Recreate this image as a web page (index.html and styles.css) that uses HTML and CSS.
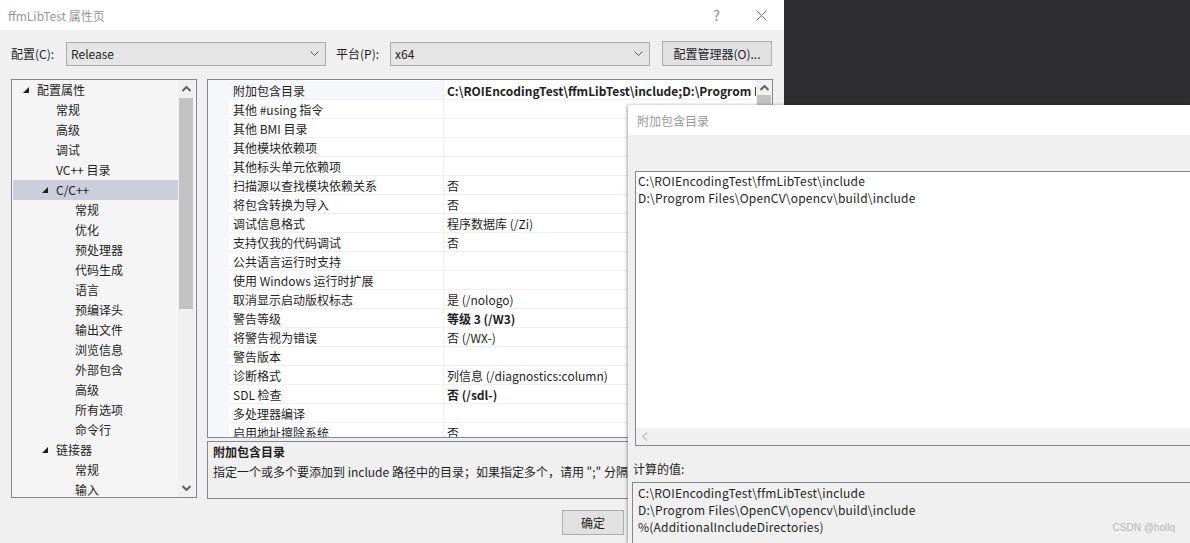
FILE: index.html
```html
<!DOCTYPE html>
<html lang="zh-CN">
<head>
    <meta charset="UTF-8">
    <title>ffmLibTest 属性页</title>
    <link rel="stylesheet" href="styles.css">
</head>
<body>

<!-- main property page dialog -->
<div class="dialog">
    <div class="titlebar">
        <span class="title">ffmLibTest 属性页</span>
        <span class="caption-btn help">?</span>
        <span class="caption-btn">
            <svg width="11" height="11" viewBox="0 0 11 11"><path d="M0.5 0.5L10.5 10.5M10.5 0.5L0.5 10.5" stroke="#777" stroke-width="1"/></svg>
        </span>
    </div>

    <div class="config">
        <span class="config-label">配置(C):</span>
        <div class="combo">
            <span>Release</span>
            <svg width="9" height="6" viewBox="0 0 9 6"><polyline points="0.5,0.5 4.5,4.5 8.5,0.5" fill="none" stroke="#555"/></svg>
        </div>
        <span class="config-label platform">平台(P):</span>
        <div class="combo">
            <span>x64</span>
            <svg width="9" height="6" viewBox="0 0 9 6"><polyline points="0.5,0.5 4.5,4.5 8.5,0.5" fill="none" stroke="#555"/></svg>
        </div>
        <button class="btn manager">配置管理器(O)...</button>
    </div>

    <div class="main">
        <!-- left tree -->
        <div class="tree">
            <div class="tree-items">
                <div class="node lv0"><svg class="tri" width="6" height="6"><polygon points="6,0 6,6 0,6" fill="#1e1e1e"/></svg>配置属性</div>
                <div class="node lv1">常规</div>
                <div class="node lv1">高级</div>
                <div class="node lv1">调试</div>
                <div class="node lv1">VC++ 目录</div>
                <div class="node lv1 open selected"><svg class="tri" width="6" height="6"><polygon points="6,0 6,6 0,6" fill="#1e1e1e"/></svg>C/C++</div>
                <div class="node lv2">常规</div>
                <div class="node lv2">优化</div>
                <div class="node lv2">预处理器</div>
                <div class="node lv2">代码生成</div>
                <div class="node lv2">语言</div>
                <div class="node lv2">预编译头</div>
                <div class="node lv2">输出文件</div>
                <div class="node lv2">浏览信息</div>
                <div class="node lv2">外部包含</div>
                <div class="node lv2">高级</div>
                <div class="node lv2">所有选项</div>
                <div class="node lv2">命令行</div>
                <div class="node lv1 open"><svg class="tri" width="6" height="6"><polygon points="6,0 6,6 0,6" fill="#1e1e1e"/></svg>链接器</div>
                <div class="node lv2">常规</div>
                <div class="node lv2">输入</div>
            </div>
            <div class="vscroll tree-scroll">
                <div class="arrow">
                    <svg width="9" height="6" viewBox="0 0 9 6"><polyline points="0.5,5 4.5,1 8.5,5" fill="none" stroke="#606060" stroke-width="2"/></svg>
                </div>
                <div class="thumb"></div>
                <div class="track"></div>
                <div class="arrow">
                    <svg width="9" height="6" viewBox="0 0 9 6"><polyline points="0.5,1 4.5,5 8.5,1" fill="none" stroke="#606060" stroke-width="2"/></svg>
                </div>
            </div>
        </div>

        <!-- property grid + description -->
        <div class="right">
            <div class="grid">
                <div class="gutter"></div>
                <div class="rows">
                    <div class="prop first"><span class="name">附加包含目录</span><span class="value bold">C:\ROIEncodingTest\ffmLibTest\include;D:\Progrom Files\OpenCV\opencv\build\include;%(AdditionalIncludeDirectories)</span></div>
                    <div class="prop"><span class="name">其他 #using 指令</span><span class="value"></span></div>
                    <div class="prop"><span class="name">其他 BMI 目录</span><span class="value"></span></div>
                    <div class="prop"><span class="name">其他模块依赖项</span><span class="value"></span></div>
                    <div class="prop"><span class="name">其他标头单元依赖项</span><span class="value"></span></div>
                    <div class="prop"><span class="name">扫描源以查找模块依赖关系</span><span class="value">否</span></div>
                    <div class="prop"><span class="name">将包含转换为导入</span><span class="value">否</span></div>
                    <div class="prop"><span class="name">调试信息格式</span><span class="value">程序数据库 (/Zi)</span></div>
                    <div class="prop"><span class="name">支持仅我的代码调试</span><span class="value">否</span></div>
                    <div class="prop"><span class="name">公共语言运行时支持</span><span class="value"></span></div>
                    <div class="prop"><span class="name">使用 Windows 运行时扩展</span><span class="value"></span></div>
                    <div class="prop"><span class="name">取消显示启动版权标志</span><span class="value">是 (/nologo)</span></div>
                    <div class="prop"><span class="name">警告等级</span><span class="value bold">等级 3 (/W3)</span></div>
                    <div class="prop"><span class="name">将警告视为错误</span><span class="value">否 (/WX-)</span></div>
                    <div class="prop"><span class="name">警告版本</span><span class="value"></span></div>
                    <div class="prop"><span class="name">诊断格式</span><span class="value">列信息 (/diagnostics:column)</span></div>
                    <div class="prop"><span class="name">SDL 检查</span><span class="value bold">否 (/sdl-)</span></div>
                    <div class="prop"><span class="name">多处理器编译</span><span class="value"></span></div>
                    <div class="prop"><span class="name">启用地址擦除系统</span><span class="value">否</span></div>
                </div>
                <div class="vscroll grid-scroll">
                    <div class="arrow">
                        <svg width="9" height="6" viewBox="0 0 9 6"><polyline points="0.5,5 4.5,1 8.5,5" fill="none" stroke="#606060" stroke-width="2"/></svg>
                    </div>
                    <div class="thumb"></div>
                </div>
            </div>
            <div class="desc">
                <div class="desc-title">附加包含目录</div>
                <div class="desc-text">指定一个或多个要添加到 include 路径中的目录；如果指定多个，请用 ";" 分隔</div>
            </div>
        </div>
    </div>

    <div class="footer">
        <button class="btn">确定</button>
    </div>
</div>

<!-- editor dialog on top -->
<div class="overlay">
    <div class="titlebar overlay-title">附加包含目录</div>
    <div class="editbox">
        <div class="edit-lines">
            <div>C:\ROIEncodingTest\ffmLibTest\include</div>
            <div>D:\Progrom Files\OpenCV\opencv\build\include</div>
        </div>
        <div class="hscroll">
            <svg width="6" height="9" viewBox="0 0 6 9"><polyline points="5,0.5 1,4.5 5,8.5" fill="none" stroke="#c4c4c4" stroke-width="1.5"/></svg>
        </div>
    </div>
    <div class="computed-label">计算的值:</div>
    <div class="computed">
        <div>C:\ROIEncodingTest\ffmLibTest\include</div>
        <div>D:\Progrom Files\OpenCV\opencv\build\include</div>
        <div>%(AdditionalIncludeDirectories)</div>
    </div>
    <span class="watermark">CSDN @hollq</span>
</div>

</body>
</html>
```

FILE: styles.css
```css
body {
    margin: 0;
    width: 1190px;
    height: 543px;
    overflow: hidden;
    position: relative;
    background-color: #2d2d30;
    font-family: "Noto Sans CJK SC", "Noto Sans", sans-serif;
    font-size: 12px;
    color: #1e1e1e;
}

/* main dialog */
.dialog {
    width: 784px;
    height: 543px;
    background-color: #f0f0f0;
    display: flex;
    flex-direction: column;
}

.titlebar {
    height: 30px;
    flex: none;
    background-color: #fff;
    display: flex;
    align-items: center;
    padding-left: 8px;
    color: #999;
}

.titlebar .title {
    flex: 1;
}

.caption-btn {
    width: 45px;
    height: 30px;
    display: flex;
    align-items: center;
    justify-content: center;
}

.help {
    font-size: 14px;
    color: #888;
}

/* configuration row */
.config {
    display: flex;
    align-items: center;
    height: 25px;
    margin-top: 11px;
    padding-left: 11px;
}

.config-label {
    width: 55px;
}

.config-label.platform {
    margin-left: 10px;
    width: 54px;
}

.combo {
    box-sizing: border-box;
    width: 260px;
    height: 24px;
    background-color: #e5e5e5;
    border: 1px solid #acacac;
    display: flex;
    align-items: center;
    justify-content: space-between;
    padding: 0 6px 0 4px;
}

.btn {
    box-sizing: border-box;
    height: 25px;
    background-color: #e1e1e1;
    border: 1px solid #adadad;
    font-family: inherit;
    font-size: 12px;
    color: #1e1e1e;
    padding: 0;
}

.btn.manager {
    width: 110px;
    margin-left: 12px;
}

/* tree + grid area */
.main {
    display: flex;
    gap: 10px;
    margin-top: 13px;
    padding-left: 11px;
}

.tree {
    box-sizing: border-box;
    width: 186px;
    height: 419px;
    border: 1px solid #828790;
    background-color: #f5f5f5;
    display: flex;
    overflow: hidden;
}

.tree-items {
    flex: 1;
    padding-left: 1px;
}

.node {
    height: 20px;
    line-height: 19px;
    white-space: nowrap;
    position: relative;
}

.node .tri {
    position: absolute;
    top: 7px;
}

.lv0 { padding-left: 24px; }
.lv0 .tri { left: 10px; }
.lv1 { padding-left: 43px; }
.lv1 .tri { left: 29px; }
.lv2 { padding-left: 62px; }

.node.selected {
    background-color: #cccedb;
}

.vscroll {
    width: 16px;
    display: flex;
    flex-direction: column;
    background-color: #f0f0f0;
}

.vscroll .arrow {
    height: 18px;
    display: flex;
    align-items: center;
    justify-content: center;
}

.vscroll .thumb {
    margin: 0 1px;
    background-color: #c2c2c2;
}

.tree-scroll {
    margin-right: 2px;
}

.tree-scroll .thumb {
    height: 211px;
}

.tree-scroll .track {
    flex: 1;
}

.right {
    width: 566px;
    display: flex;
    flex-direction: column;
    gap: 3px;
}

.grid {
    box-sizing: border-box;
    height: 359px;
    border: 1px solid #828790;
    background-color: #fff;
    display: flex;
    overflow: hidden;
}

.gutter {
    width: 21px;
    background-color: #f5f7fb;
}

.rows {
    flex: 1;
    overflow: hidden;
    padding-top: 1px;
}

.prop {
    box-sizing: border-box;
    display: grid;
    grid-template-columns: 214px 1fr;
    height: 19px;
    line-height: 20px;
    border-bottom: 1px solid #f0f0f0;
    white-space: nowrap;
}

.prop .name {
    padding-left: 4px;
    overflow: hidden;
}

.prop .value {
    padding-left: 3px;
    border-left: 1px solid #f0f0f0;
    overflow: hidden;
}

.prop.first .name {
    background-color: #f5f7fb;
}

.bold {
    font-weight: bold;
}

.grid-scroll .thumb {
    height: 400px;
}

.desc {
    box-sizing: border-box;
    height: 58px;
    border: 1px solid #828790;
    background-color: #f0f0f0;
    padding-left: 5px;
    line-height: 19px;
    white-space: nowrap;
    overflow: hidden;
}

.desc-title {
    font-weight: bold;
}

.desc-text {
    width: 415px;
    overflow: hidden;
    margin-top: 1px;
}

.footer {
    display: flex;
    margin-top: 11px;
    padding-left: 562px;
}

.footer .btn {
    width: 62px;
    height: 25px;
    flex: none;
}

/* the editor window on top */
.overlay {
    position: absolute;
    left: 628px;
    top: 105px;
    width: 562px;
    height: 438px;
    background-color: #f0f0f0;
    box-shadow: -1px 0 3px rgba(0, 0, 0, 0.35);
    display: flex;
    flex-direction: column;
    overflow: hidden;
}

.overlay-title {
    height: 30px;
    padding-left: 9px;
}

.editbox {
    box-sizing: border-box;
    width: 600px;
    height: 275px;
    margin: 36px 0 0 7px;
    border: 1px solid #828790;
    background-color: #fff;
    display: flex;
    flex-direction: column;
}

.edit-lines {
    flex: 1;
    padding: 0 2px;
    line-height: 17px;
    letter-spacing: 0.2px;
}

.hscroll {
    height: 17px;
    background-color: #f0f0f0;
    display: flex;
    align-items: center;
    padding-left: 6px;
}

.computed-label {
    margin: 13px 0 0 5px;
    line-height: 19px;
}

.computed {
    box-sizing: border-box;
    width: 600px;
    flex: 1;
    margin: 4px 0 0 4px;
    border: 1px solid #828790;
    border-bottom: none;
    padding: 1px 5px;
    line-height: 17px;
    letter-spacing: 0.2px;
}

.watermark {
    position: absolute;
    right: 15px;
    top: 417px;
    font-family: "Liberation Sans", sans-serif;
    font-size: 10px;
    color: #b4b4b4;
}
```
